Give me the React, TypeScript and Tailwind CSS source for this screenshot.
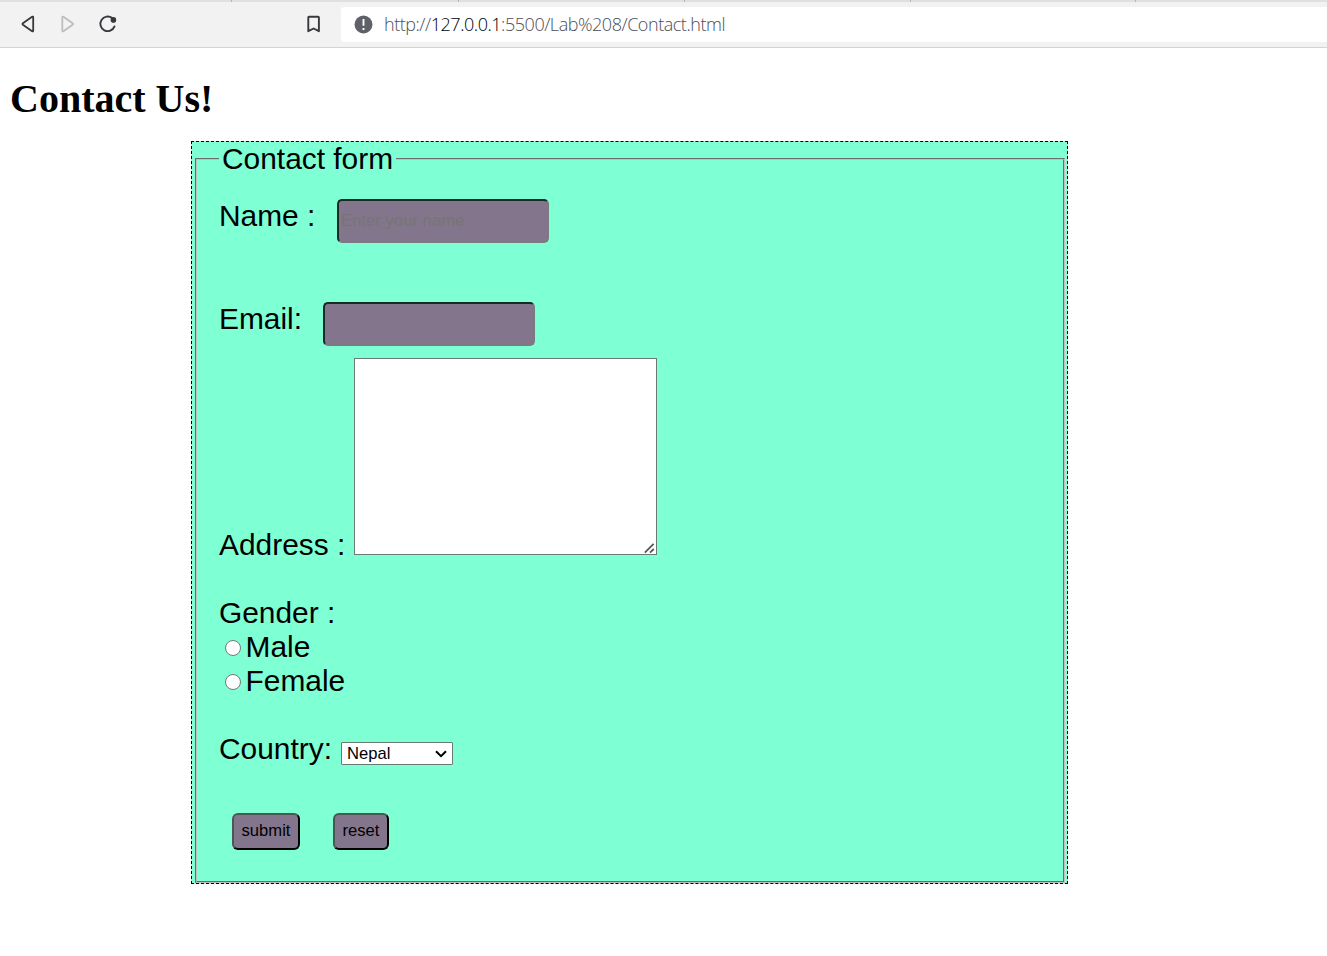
import React from 'react';

const tabs = ['w-[232px]', 'w-[227px]', 'w-[226px]', 'w-[226px]', 'w-[225px]'];

function Toolbar() {
  return (
    <header>
      <div className="flex h-[2px] bg-[#dee0e4]">
        {tabs.map((w, i) => (
          <div key={i} className={`${w} shrink-0 border-r border-[#b2b4b8]`} />
        ))}
      </div>
      <div className="flex h-[46px] items-center border-b border-[#d4d4d6] bg-[#f2f2f2]">
        <svg className="mb-[1px] ml-[20px] h-5 w-5 shrink-0" viewBox="0 0 20 20" fill="none" stroke="#37393d" strokeWidth="1.8" strokeLinejoin="round">
          <path d="M13.2 3.4q0-1.3-1.1-.6L2.9 9.3q-.9.7 0 1.4l9.2 6.5q1.1.7 1.1-.6Z" />
        </svg>
        <svg className="mb-[1px] ml-[20px] h-5 w-5 shrink-0" viewBox="0 0 20 20" fill="none" stroke="#bcbdc0" strokeWidth="1.8" strokeLinejoin="round">
          <path d="M2.3 3.4q0-1.3 1.1-.6l9.2 6.5q.9.7 0 1.4l-9.2 6.5q-1.1.7-1.1-.6Z" />
        </svg>
        <svg className="mb-[1px] ml-[18px] h-5 w-5 shrink-0" viewBox="0 0 20 20" fill="none" stroke="#37393d" strokeWidth="1.9" strokeLinecap="round">
          <path d="M14.2 4.1A7.3 7.3 0 1 0 16.5 12.4" />
          <circle cx="15.4" cy="5.9" r="2.8" fill="#37393d" stroke="none" />
        </svg>
        <svg className="mb-[1px] ml-[186px] h-5 w-5 shrink-0" viewBox="0 0 20 20" fill="none" stroke="#37393d" strokeWidth="1.9" strokeLinejoin="round">
          <path d="M4.3 17.2V3.6q0-.8.8-.8h9q.8 0 .8.8v13.6l-5.3-2.7Z" />
        </svg>
        <div className="ml-[17px] flex h-[35px] flex-1 items-center rounded-l-[4px] bg-white pl-[13px]">
          <svg className="h-[19px] w-[19px] shrink-0" viewBox="0 0 19 19">
            <circle cx="9.5" cy="9.5" r="9" fill="#5f6168" />
            <path d="M9.5 4v6.8M9.5 13v2" stroke="#fff" strokeWidth="1.9" />
          </svg>
          <div className="mb-[2px] ml-[11px] whitespace-nowrap font-['Open_Sans',sans-serif] text-[18px] leading-[24px] font-light tracking-[-0.46px] text-[#4c4e54]">
            http://<span className="text-black">127.0.0.1</span>:5500/Lab%208/Contact.html
          </div>
        </div>
      </div>
    </header>
  );
}

const field =
  'h-[44px] w-[212px] rounded-[5px] border-2 border-t-[#182a26] border-l-[#182a26] border-r-[#7b7a80] border-b-[#7b7a80] bg-[#83758b] px-[2px] text-[16.7px] placeholder:text-[#757575] placeholder:opacity-100 outline-none';

const button =
  'h-[37px] rounded-[6px] border-2 border-t-[#4b5656] border-l-[#4b5656] border-r-black border-b-black bg-[#83758b] text-[16.6px] leading-none';

function ContactForm() {
  return (
    <form
      onSubmit={(e) => e.preventDefault()}
      className="mt-[19px] ml-[191px] h-[743px] w-[877px] border border-dashed border-black bg-[#7fffd4] px-[3px] font-['Liberation_Sans',Arial,sans-serif] text-[29.9px] leading-[34px] text-black"
    >
      <fieldset className="h-[741px] w-[870px] border-2 border-[#c0c0c0] px-[22px] [border-style:groove]">
        <legend className="px-[3px]">Contact form</legend>
        <div className="mt-[23px] flex h-[44px] items-start">
          <label htmlFor="name" className="w-[118px]">Name :</label>
          <input id="name" placeholder="Enter your name" className={field} />
        </div>
        <div className="mt-[59px] flex h-[44px] items-start">
          <label htmlFor="email" className="w-[104px]">Email:</label>
          <input id="email" className={field} />
        </div>
        <div className="mt-[12px] flex h-[204px] items-start">
          <label htmlFor="address" className="w-[135px] self-end">Address :</label>
          <div className="relative h-[197px] w-[303px]">
            <textarea id="address" className="block h-full w-full resize-none border border-[#6a7a75] bg-white outline-none" />
            <svg className="pointer-events-none absolute right-[2px] bottom-[1px] h-[11px] w-[11px]" viewBox="0 0 11 11" stroke="#55585a" strokeWidth="1.8">
              <path d="M.8 9.6 9.6.8M6 9.6 9.8 6" />
            </svg>
          </div>
        </div>
        <div className="mt-[34px]">Gender :</div>
        {['Male', 'Female'].map((g) => (
          <label key={g} className="flex h-[34px] items-center pl-[6px]">
            <input type="radio" name="gender" className="mt-[2px] mr-[4.5px] h-[16px] w-[16px] appearance-none rounded-full border border-[#767676] bg-white checked:border-4" />
            {g}
          </label>
        ))}
        <div className="mt-[34px] flex h-[34px] items-start">
          <label htmlFor="country" className="w-[122px]">Country:</label>
          <div className="relative mt-[10px] h-[23px] w-[112px]">
            <select id="country" className="block h-[23px] w-[112px] appearance-none rounded-[1px] border border-[#6a7a75] bg-white pl-[5px] text-[16.6px] leading-[20px] outline-none">
              <option>Nepal</option>
            </select>
            <svg className="pointer-events-none absolute top-[8px] right-[6px] h-[9px] w-[12px]" viewBox="0 0 12 9" fill="none" stroke="#000" strokeWidth="2">
              <path d="M1 1.2 6 6.2l5-5" />
            </svg>
          </div>
        </div>
        <div className="mt-[47px] flex pl-[13px]">
          <button type="submit" className={`${button} w-[68px]`}>submit</button>
          <button type="reset" className={`${button} ml-[33px] w-[56px]`}>reset</button>
        </div>
      </fieldset>
    </form>
  );
}

export default function App() {
  return (
    <div className="h-[956px] overflow-hidden bg-white">
      <Toolbar />
      <h1 className="mt-[27px] ml-[10px] h-[47px] font-['Liberation_Serif',serif] text-[40px] leading-[47px] font-bold text-black">
        Contact Us!
      </h1>
      <ContactForm />
    </div>
  );
}
